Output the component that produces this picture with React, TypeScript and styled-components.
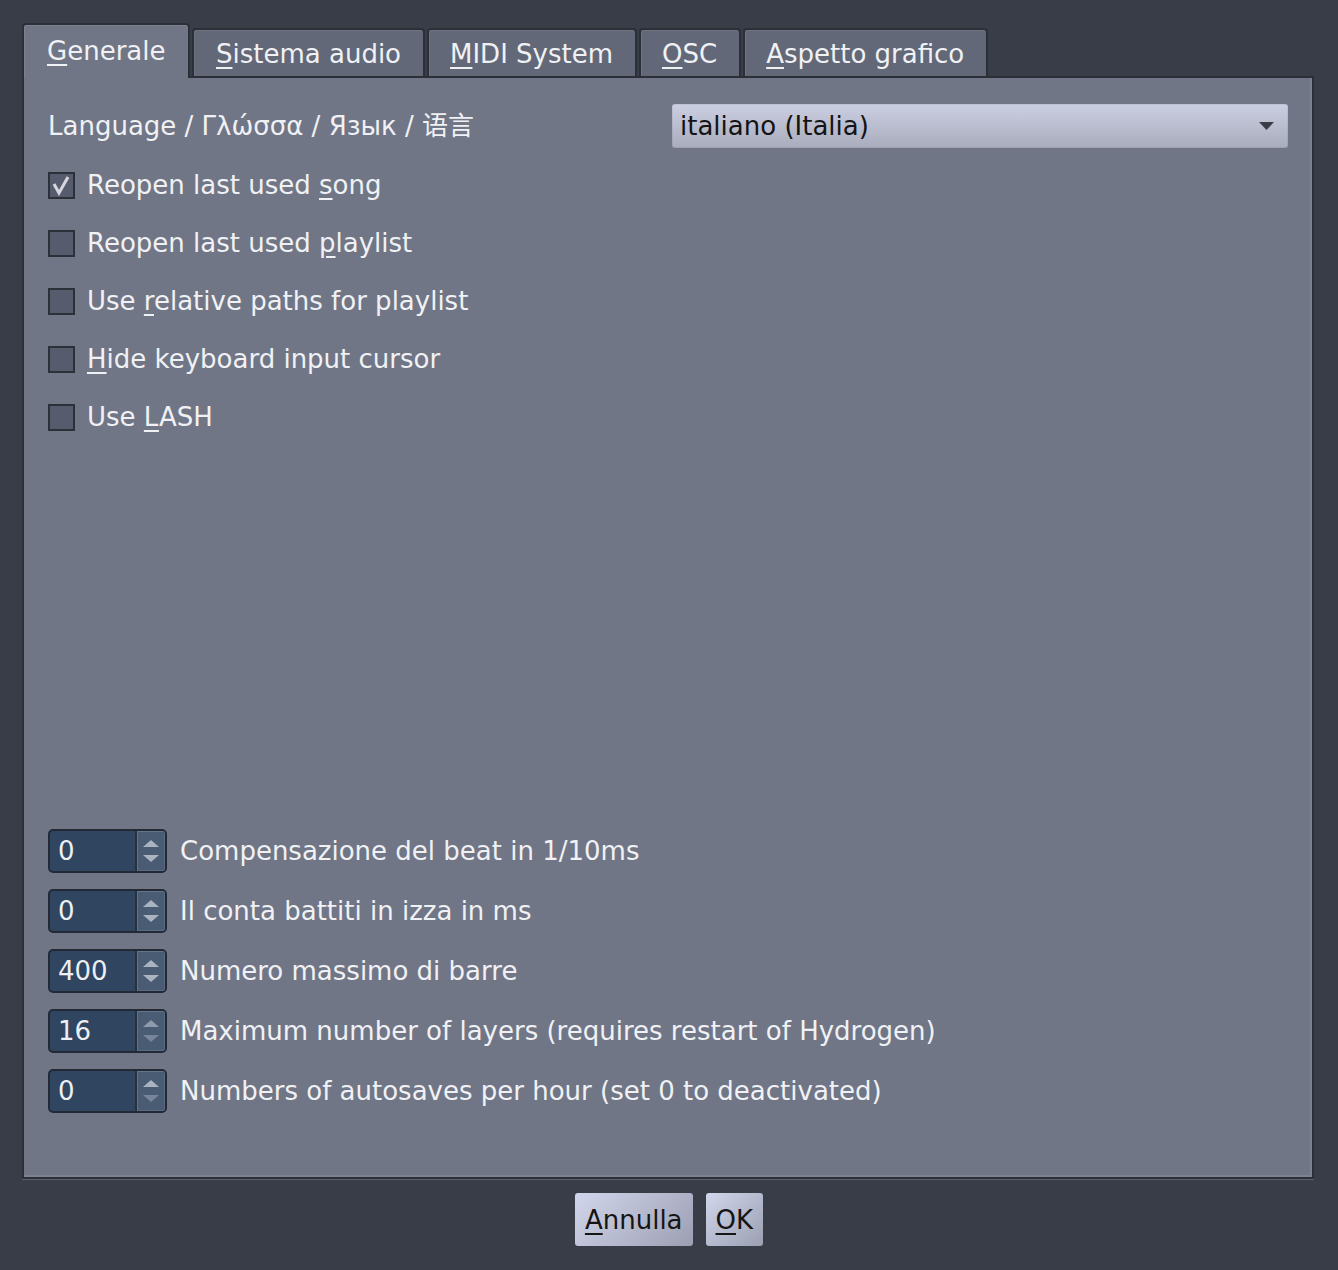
import React from 'react';
import styled, { createGlobalStyle } from 'styled-components';

const Global = createGlobalStyle`
  html, body { margin: 0; padding: 0; background: #393d48; }
  body { font-family: "DejaVu Sans", "Noto Sans CJK SC", sans-serif; }
`;

const Window = styled.div`
  box-sizing: border-box;
  width: 1338px;
  height: 1270px;
  padding: 23px 24px 0 22px;
  display: flex;
  flex-direction: column;
  background: #393d48;
  font-size: 26px;
  color: #f0f1f4;
`;

const TabBar = styled.div`
  display: flex;
  align-items: flex-end;
  gap: 2px;
  height: 53px;
  position: relative;
  z-index: 1;
`;

const Tab = styled.div<{ $active?: boolean }>`
  box-sizing: border-box;
  height: ${(p) => (p.$active ? 55 : 48)}px;
  margin-bottom: ${(p) => (p.$active ? -2 : 0)}px;
  padding: ${(p) => (p.$active ? '0 23px 2px' : '2px 21.5px 0')};
  display: flex;
  align-items: center;
  background: ${(p) => (p.$active ? '#707686' : '#626877')};
  border: 2px solid #2c2f38;
  border-bottom: none;
  border-radius: 4px 4px 0 0;
  box-shadow: inset 1px 1px 0 rgba(255, 255, 255, 0.08);
  white-space: nowrap;
`;

const Mn = styled.span`
  text-decoration: underline;
  text-decoration-thickness: 2px;
  text-underline-offset: 4px;
`;

const Panel = styled.div`
  box-sizing: border-box;
  height: 1103px;
  background: #707686;
  border: 2px solid #2c2f38;
  box-shadow: inset -2px -2px 0 #7b8191, 0 1px 0 #5d6270;
  padding: 26px 24px 64px 24px;
  display: flex;
  flex-direction: column;
`;

const LangRow = styled.div`
  display: flex;
  align-items: center;
  height: 44px;
`;

const LangLabel = styled.span`
  line-height: 30px;
  height: 30px;
`;

const Combo = styled.div`
  box-sizing: border-box;
  margin-left: auto;
  width: 616px;
  height: 44px;
  border-radius: 3px;
  background: linear-gradient(#cbcfe2, #a9acbc);
  box-shadow: inset 0 0 0 1px rgba(0, 0, 0, 0.06);
  color: #141414;
  display: flex;
  align-items: center;
  padding: 0 14px 0 8px;
`;

const ComboText = styled.span`
  flex: 1;
`;

const CheckList = styled.div`
  display: flex;
  flex-direction: column;
  gap: 22px;
  margin-top: 19px;
`;

const CheckRow = styled.div`
  display: flex;
  align-items: center;
  gap: 12px;
  height: 36px;
`;

const Box = styled.div`
  box-sizing: border-box;
  width: 27px;
  height: 27px;
  border: 2px solid #2c3039;
  background: #565b6e;
  display: flex;
  align-items: center;
  justify-content: center;
`;

const Spacer = styled.div`
  flex: 1;
`;

const SpinList = styled.div`
  display: flex;
  flex-direction: column;
  gap: 16px;
`;

const SpinRow = styled.div`
  display: flex;
  align-items: center;
  gap: 13px;
  height: 44px;
`;

const Spin = styled.div`
  box-sizing: border-box;
  width: 119px;
  height: 44px;
  border: 2px solid #232a36;
  border-radius: 5px;
  background: #2f4560;
  display: flex;
  overflow: hidden;
`;

const SpinValue = styled.div`
  flex: 1;
  padding-left: 8px;
  display: flex;
  align-items: center;
  color: #eceff3;
`;

const SpinButtons = styled.div`
  box-sizing: border-box;
  width: 30px;
  background: #4a5c74;
  border-left: 2px solid #26303e;
  box-shadow: inset 1px 1px 0 #62738a, inset -1px -1px 0 #5a6a80;
  display: flex;
  flex-direction: column;
  align-items: center;
  justify-content: center;
  gap: 8px;
`;

const Arrow = styled.div<{ $down?: boolean; $dim?: boolean }>`
  width: 0;
  height: 0;
  border-left: 8px solid transparent;
  border-right: 8px solid transparent;
  ${(p) =>
    p.$down
      ? `border-top: 7px solid ${p.$dim ? '#77849a' : '#aab3c0'};`
      : `border-bottom: 7px solid ${p.$dim ? '#8f9aab' : '#aab3c0'};`}
`;

const Footer = styled.div`
  display: flex;
  justify-content: center;
  gap: 13px;
  margin-top: 14px;
  padding-left: 2px;
`;

const Button = styled.div`
  box-sizing: border-box;
  height: 53px;
  padding: 0 10px;
  border-radius: 3px;
  background: linear-gradient(135deg, #d2d6ec, #9c9fb2);
  color: #151515;
  display: flex;
  align-items: center;
`;

const checks = [
  { pre: 'Reopen last used ', mn: 's', post: 'ong', on: true },
  { pre: 'Reopen last used ', mn: 'p', post: 'laylist' },
  { pre: 'Use ', mn: 'r', post: 'elative paths for playlist' },
  { pre: '', mn: 'H', post: 'ide keyboard input cursor' },
  { pre: 'Use ', mn: 'L', post: 'ASH' },
];

const spins = [
  { v: '0', label: 'Compensazione del beat in 1/10ms' },
  { v: '0', label: 'Il conta battiti in izza in ms' },
  { v: '400', label: 'Numero massimo di barre' },
  { v: '16', label: 'Maximum number of layers (requires restart of Hydrogen)', dimUp: true, dimDown: true },
  { v: '0', label: 'Numbers of autosaves per hour (set 0 to deactivated)', dimDown: true },
];

export default function App() {
  return (
    <>
      <Global />
      <Window>
        <TabBar>
          <Tab $active><Mn>G</Mn>enerale</Tab>
          <Tab><Mn>S</Mn>istema audio</Tab>
          <Tab><Mn>M</Mn>IDI System</Tab>
          <Tab><Mn>O</Mn>SC</Tab>
          <Tab><Mn>A</Mn>spetto grafico</Tab>
        </TabBar>
        <Panel>
          <LangRow>
            <LangLabel>Language / Γλώσσα / Язык / 语言</LangLabel>
            <Combo>
              <ComboText>italiano (Italia)</ComboText>
              <svg width="15" height="8" viewBox="0 0 15 8">
                <polygon points="0,0 15,0 7.5,8" fill="#3a3d47" />
              </svg>
            </Combo>
          </LangRow>
          <CheckList>
            {checks.map((c, i) => (
              <CheckRow key={i}>
                <Box>
                  {c.on && (
                    <svg width="21" height="21" viewBox="0 0 21 21">
                      <polyline points="3,9 8,18 17,2" fill="none" stroke="#d6d7dc" strokeWidth="3" />
                    </svg>
                  )}
                </Box>
                <span>
                  {c.pre}
                  <Mn>{c.mn}</Mn>
                  {c.post}
                </span>
              </CheckRow>
            ))}
          </CheckList>
          <Spacer />
          <SpinList>
            {spins.map((s, i) => (
              <SpinRow key={i}>
                <Spin>
                  <SpinValue>{s.v}</SpinValue>
                  <SpinButtons>
                    <Arrow $dim={s.dimUp} />
                    <Arrow $down $dim={s.dimDown} />
                  </SpinButtons>
                </Spin>
                <span>{s.label}</span>
              </SpinRow>
            ))}
          </SpinList>
        </Panel>
        <Footer>
          <Button><Mn>A</Mn>nnulla</Button>
          <Button><Mn>O</Mn>K</Button>
        </Footer>
      </Window>
    </>
  );
}
